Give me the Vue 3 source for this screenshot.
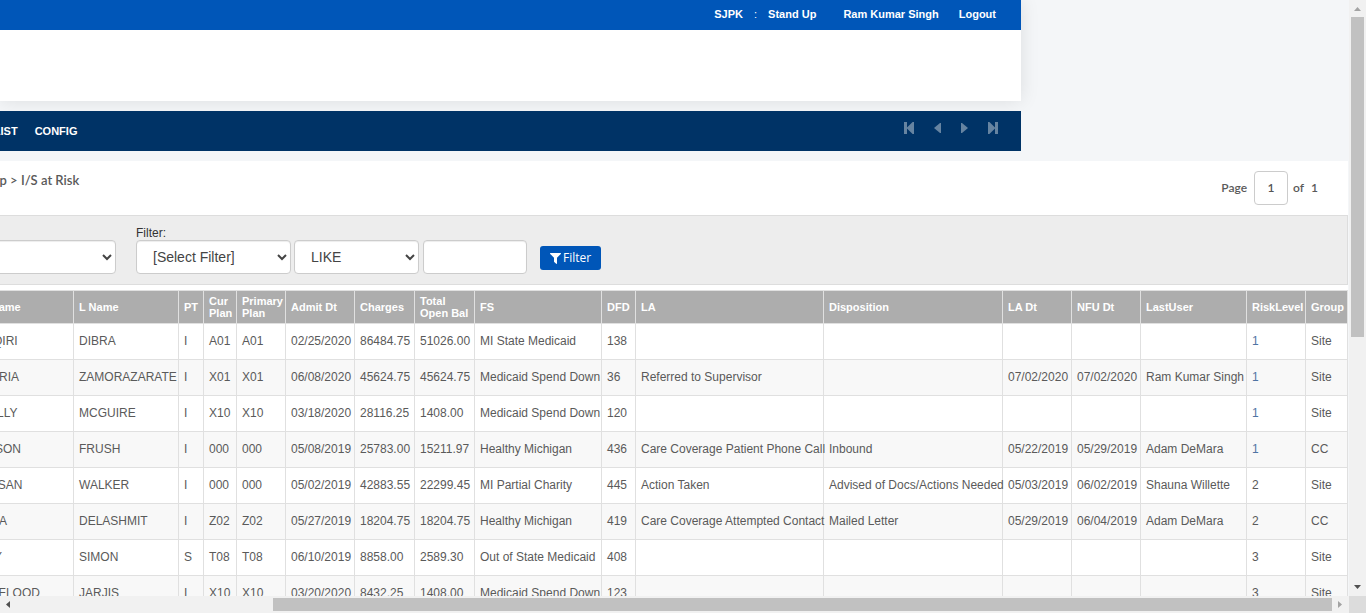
<script setup>
import { ref } from 'vue'

const page = ref('1')
const field = ref('[Select Filter]')
const operator = ref('LIKE')
const view = ref('')
const term = ref('')

const columns = [
  { label: 'F Name', cls: 'c-first' },
  { label: 'L Name', cls: 'c-last' },
  { label: 'PT', cls: 'c-pt' },
  { label: 'Cur Plan', cls: 'c-cur' },
  { label: 'Primary Plan', cls: 'c-primary' },
  { label: 'Admit Dt', cls: 'c-date' },
  { label: 'Charges', cls: 'c-money' },
  { label: 'Total Open Bal', cls: 'c-money' },
  { label: 'FS', cls: 'c-fs' },
  { label: 'DFD', cls: 'c-dfd' },
  { label: 'LA', cls: 'c-la' },
  { label: 'Disposition', cls: 'c-disposition' },
  { label: 'LA Dt', cls: 'c-date' },
  { label: 'NFU Dt', cls: 'c-date' },
  { label: 'LastUser', cls: 'c-user' },
  { label: 'RiskLevel', cls: 'c-risk' },
  { label: 'Group', cls: 'c-group' },
]

const rows = [
  ['DIQIRI', 'DIBRA', 'I', 'A01', 'A01', '02/25/2020', '86484.75', '51026.00', 'MI State Medicaid', '138', '', '', '', '', '', '1', 'Site'],
  ['MARIA', 'ZAMORAZARATE', 'I', 'X01', 'X01', '06/08/2020', '45624.75', '45624.75', 'Medicaid Spend Down', '36', 'Referred to Supervisor', '', '07/02/2020', '07/02/2020', 'Ram Kumar Singh', '1', 'Site'],
  ['KELLY', 'MCGUIRE', 'I', 'X10', 'X10', '03/18/2020', '28116.25', '1408.00', 'Medicaid Spend Down', '120', '', '', '', '', '', '1', 'Site'],
  ['JASON', 'FRUSH', 'I', '000', '000', '05/08/2019', '25783.00', '15211.97', 'Healthy Michigan', '436', 'Care Coverage Patient Phone Call', 'Inbound', '05/22/2019', '05/29/2019', 'Adam DeMara', '1', 'CC'],
  ['SUSAN', 'WALKER', 'I', '000', '000', '05/02/2019', '42883.55', '22299.45', 'MI Partial Charity', '445', 'Action Taken', 'Advised of Docs/Actions Needed', '05/03/2019', '06/02/2019', 'Shauna Willette', '2', 'Site'],
  ['ISLA', 'DELASHMIT', 'I', 'Z02', 'Z02', '05/27/2019', '18204.75', '18204.75', 'Healthy Michigan', '419', 'Care Coverage Attempted Contact', 'Mailed Letter', '05/29/2019', '06/04/2019', 'Adam DeMara', '2', 'CC'],
  ['JAY', 'SIMON', 'S', 'T08', 'T08', '06/10/2019', '8858.00', '2589.30', 'Out of State Medicaid', '408', '', '', '', '', '', '3', 'Site'],
  ['AL FLOOD', 'JARJIS', 'I', 'X10', 'X10', '03/20/2020', '8432.25', '1408.00', 'Medicaid Spend Down', '123', '', '', '', '', '', '3', 'Site'],
]
</script>

<template>
  <div class="window">
    <div class="viewport">
      <header class="masthead">
        <div class="topbar">
          <span class="site">SJPK</span>
          <span class="colon">:</span>
          <a class="standup" href="#">Stand Up</a>
          <a class="user" href="#">Ram Kumar Singh</a>
          <a href="#">Logout</a>
        </div>
      </header>

      <nav class="menu">
        <a class="worklist" href="#">WORKLIST</a>
        <a href="#">CONFIG</a>
        <div class="pager">
          <button type="button" aria-label="First">
            <svg width="10" height="12" viewBox="0 0 10 12"><path d="M0 0H3V5.4L8.6 0H10V12H8.6L3 6.6V12H0Z" /></svg>
          </button>
          <button type="button" aria-label="Previous">
            <svg width="7" height="12" viewBox="0 0 7 12"><path d="M7 1V11H6L0 6L6 1Z" /></svg>
          </button>
          <button type="button" aria-label="Next">
            <svg width="7" height="12" viewBox="0 0 7 12"><path d="M0 1V11H1L7 6L1 1Z" /></svg>
          </button>
          <button type="button" aria-label="Last">
            <svg width="10" height="12" viewBox="0 0 10 12"><path d="M10 0H7V5.4L1.4 0H0V12H1.4L7 6.6V12H10Z" /></svg>
          </button>
        </div>
      </nav>

      <main class="content">
        <div class="heading">
          <h1>Follow Up &gt; I/S at Risk</h1>
          <div class="page-of">
            <label for="page">Page</label>
            <input id="page" v-model="page" type="text" />
            <span>of</span>
            <span class="total">1</span>
          </div>
        </div>

        <form class="filters" @submit.prevent>
          <select v-model="view" class="control view" aria-label="View">
            <option value=""></option>
          </select>
          <div class="field">
            <label for="field">Filter:</label>
            <select id="field" v-model="field" class="control by">
              <option>[Select Filter]</option>
            </select>
          </div>
          <select v-model="operator" class="control operator" aria-label="Operator">
            <option>LIKE</option>
          </select>
          <input v-model="term" class="control term" type="text" aria-label="Filter value" />
          <button class="apply" type="submit">
            <svg width="11" height="11" viewBox="0 0 11 11"><path d="M0.3 0H10.7Q11.2 .5 10.8 .9L7 4.8V10.5Q6.8 11.2 6.2 10.8L4.2 8.9Q4 8.7 4 8.4V4.8L.2 .9Q-.2 .4 .3 0Z" /></svg>
            <span>Filter</span>
          </button>
        </form>

        <table>
          <colgroup>
            <col v-for="(c, i) in columns" :key="i" :class="c.cls" />
          </colgroup>
          <thead>
            <tr>
              <th v-for="c in columns" :key="c.label" scope="col">{{ c.label }}</th>
            </tr>
          </thead>
          <tbody>
            <tr v-for="(r, i) in rows" :key="i">
              <td v-for="(v, j) in r" :key="j">
                <a v-if="j === 15 && v === '1'" href="#">{{ v }}</a>
                <template v-else>{{ v }}</template>
              </td>
            </tr>
          </tbody>
        </table>
      </main>
    </div>

    <div class="bar vertical">
      <svg width="17" height="17" viewBox="0 0 17 17"><path fill="#a3a3a3" d="M5 11H12L8.500 7Z" /></svg>
      <div class="track"><div class="thumb"></div></div>
      <svg width="17" height="17" viewBox="0 0 17 17"><path fill="#505050" d="M5 6H12L8.500 10Z" /></svg>
    </div>
    <div class="bar horizontal">
      <svg width="17" height="17" viewBox="0 0 17 17"><path fill="#505050" d="M10 5V12L6 8.500Z" /></svg>
      <div class="track"><div class="thumb"></div></div>
      <svg width="17" height="17" viewBox="0 0 17 17"><path fill="#a3a3a3" d="M6 5V12L10 8.500Z" /></svg>
    </div>
    <div class="corner"></div>
  </div>
</template>

<style>
html,
body {
  overflow: hidden;
}
</style>

<style scoped>
* {
  box-sizing: border-box;
}

.window {
  display: grid;
  grid-template-columns: minmax(0, 1fr) 17px;
  grid-template-rows: minmax(0, 1fr) 17px;
  height: 100vh;
  font-family: "Liberation Sans", Arial, sans-serif;
  font-size: 12px;
  color: #5a5a5a;
}

.viewport {
  overflow: hidden;
  background: #f4f6f8;
}

a {
  color: inherit;
  text-decoration: none;
}

.masthead {
  height: 101px;
  margin-right: 328px;
  background: #fff;
  box-shadow: 0 0 18px rgba(0, 0, 0, 0.1);
}

.topbar {
  display: flex;
  align-items: center;
  justify-content: flex-end;
  height: 30px;
  padding: 0 25px 2px 0;
  background: #0056b8;
  color: #fff;
  font-size: 11px;
  font-weight: bold;
}

.colon {
  margin: 0 11px;
  font-weight: normal;
}

.standup {
  margin-right: 27px;
}

.user {
  margin-right: 20px;
}

.menu {
  display: flex;
  align-items: center;
  gap: 17px;
  height: 40px;
  margin: 10px 328px 10px 0;
  background: #003366;
  color: #fff;
  font-size: 11px;
  font-weight: bold;
}

.worklist {
  margin-left: -41px;
}

.pager {
  display: flex;
  align-items: center;
  gap: 20px;
  margin: 0 23px 6px auto;
}

.pager button {
  display: flex;
  padding: 0;
  border: 0;
  background: none;
}

.pager svg {
  fill: #6684a1;
}

.content {
  margin-right: 1px;
  min-height: 100%;
  background: #fff;
}

.heading {
  display: flex;
  justify-content: space-between;
  height: 54px;
  padding: 10px 30px 0 0;
  font-family: Lato, sans-serif;
  font-weight: 600;
}

h1 {
  margin: 0 0 0 -51px;
  font-size: 13px;
  font-weight: 600;
  line-height: 18px;
}

.page-of {
  display: flex;
  align-items: center;
  height: 34px;
}

.page-of label,
.page-of span {
  padding-bottom: 2px;
}

.page-of input {
  width: 34px;
  height: 34px;
  margin: 0 5px 0 7px;
  padding: 0 0 2px;
  border: 1px solid #ccc;
  border-radius: 4px;
  color: #555;
  font: inherit;
  text-align: center;
}

.total {
  margin-left: 7px;
}

.filters {
  display: flex;
  align-items: flex-end;
  height: 70px;
  padding-bottom: 10px;
  border: 1px solid #ddd;
  border-left: 0;
  background: #ededed;
  color: #333;
}

.field {
  display: flex;
  flex-direction: column;
  margin: 0 3px 0 20px;
}

.field label {
  line-height: 14px;
}

.control {
  height: 34px;
  padding: 6px 12px;
  border: 1px solid #ccc;
  border-radius: 4px;
  background: #fff;
  box-shadow: inset 0 1px 1px rgba(0, 0, 0, 0.075);
  color: #444;
  font-family: inherit;
  font-size: 14px;
}

.view {
  width: 200px;
  margin-left: -84px;
}

.by {
  width: 155px;
}

.operator {
  width: 125px;
  margin-right: 4px;
}

.term {
  width: 104px;
}

.apply {
  display: flex;
  align-items: center;
  gap: 2px;
  height: 24px;
  margin: 0 0 4px 13px;
  padding: 0 10px;
  border: 0;
  border-radius: 3px;
  background: #0056b8;
  color: #fff;
  font-family: "Open Sans", sans-serif;
  font-size: 12px;
}

.apply span {
  padding-bottom: 2px;
}

.apply svg {
  fill: #fff;
}

table {
  width: calc(100% + 25px);
  margin: 5px 0 0 -25px;
  table-layout: fixed;
  border-collapse: collapse;
}

th,
td {
  padding: 0 0 0 5px;
  border: 1px solid #e0e0e0;
  text-align: left;
}

th {
  height: 33px;
  background: #adadad;
  color: #fff;
  font-size: 11px;
  line-height: 12px;
}

th:nth-child(4),
th:nth-child(8) {
  padding-right: 2px;
}

td {
  height: 36px;
  padding-bottom: 2px;
  white-space: nowrap;
}

td a {
  color: #4f74a3;
}

tbody tr:nth-child(even) {
  background: #f8f8f8;
}

.c-first { width: 98px; }
.c-last { width: 105px; }
.c-pt { width: 25px; }
.c-cur { width: 33px; }
.c-primary { width: 49px; }
.c-date { width: 69px; }
.c-money { width: 60px; }
.c-fs { width: 127px; }
.c-dfd { width: 34px; }
.c-la { width: 188px; }
.c-user { width: 106px; }
.c-risk { width: 59px; }
.c-group { width: 42px; }

.bar {
  display: flex;
  background: #f1f1f1;
}

.vertical {
  flex-direction: column;
}

.bar svg {
  flex: none;
}

.track {
  display: flex;
  flex: 1;
}

.thumb {
  background: #c1c1c1;
}

.vertical .thumb {
  width: 13px;
  height: 57%;
  margin: 0 2px;
}

.horizontal .track {
  justify-content: flex-end;
}

.horizontal .thumb {
  width: 80.5%;
  margin: 2px 0;
}

.corner {
  background: #dcdcdc;
}
</style>
